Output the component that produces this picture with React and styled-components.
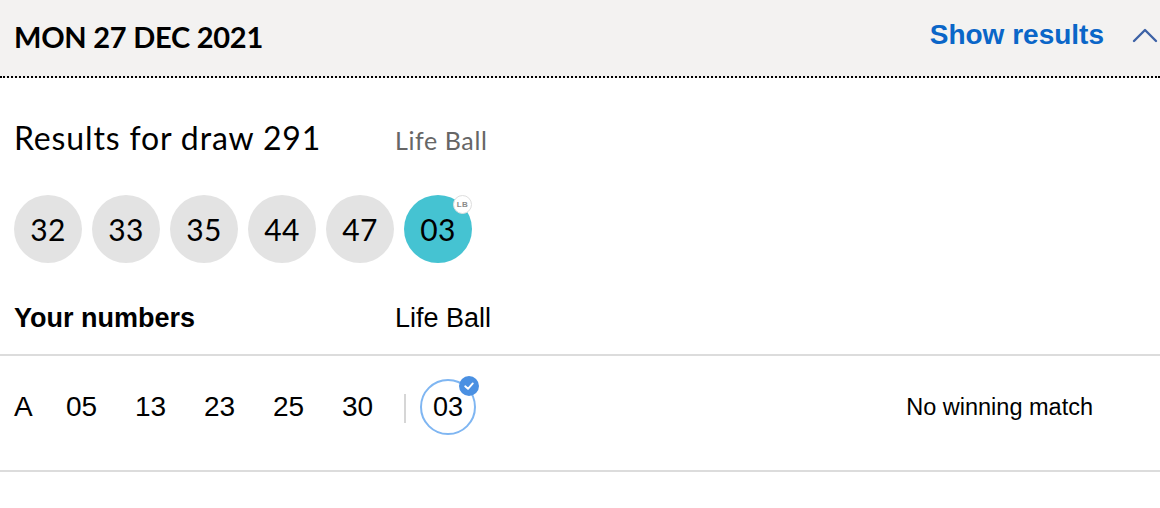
import React from 'react';
import styled, { createGlobalStyle } from 'styled-components';

const GlobalStyle = createGlobalStyle`
  html, body {
    margin: 0;
    padding: 0;
    background: #ffffff;
  }
  body {
    font-family: "Liberation Sans", Arial, sans-serif;
    color: #000;
  }
`

const Page = styled.div`
  width: 1160px;
  height: 508px;
  overflow: hidden;
  background: #fff;
`

const Header = styled.div`
  height: 76px;
  box-sizing: content-box;
  display: flex;
  align-items: center;
  justify-content: space-between;
  padding: 0 2px 0 14px;
  background: #f3f2f1;
  border-bottom: 2px dotted #000;
`

const DrawDate = styled.h2`
  margin: 0;
  font-family: Lato, "Noto Sans", sans-serif;
  font-size: 29px;
  font-weight: 700;
  letter-spacing: -0.25px;
  padding-bottom: 4px;
`

const Toggle = styled.button`
  display: flex;
  align-items: center;
  gap: 28px;
  border: 0;
  background: none;
  padding: 0 0 6px 0;
  cursor: pointer;
  font-family: "Liberation Sans", Arial, sans-serif;
  font-size: 28px;
  font-weight: 700;
  color: #0a66c8;
`

const Body = styled.div`
  padding: 0 14px;
`

const ResultsHead = styled.div`
  display: flex;
  align-items: baseline;
  padding-top: 40px;
`

const ResultsTitle = styled.h3`
  margin: 0;
  width: 381px;
  font-family: Lato, "Noto Sans", sans-serif;
  font-size: 32px;
  font-weight: 400;
  letter-spacing: 0.85px;
`

const Muted = styled.span`
  font-family: Lato, "Noto Sans", sans-serif;
  font-size: 25px;
  letter-spacing: 0.6px;
  color: #666;
`

const Balls = styled.div`
  display: flex;
  gap: 10px;
  margin-top: 38px;
`

const Ball = styled.div`
  position: relative;
  width: 68px;
  height: 68px;
  border-radius: 50%;
  display: flex;
  align-items: center;
  justify-content: center;
  background: ${p => (p.$life ? '#45c3d2' : '#e3e3e3')};
  font-family: Lato, "Noto Sans", sans-serif;
  font-size: 30px;
  letter-spacing: 0.3px;
`

const LbBadge = styled.span`
  position: absolute;
  top: 0;
  right: 0;
  width: 19px;
  height: 19px;
  border-radius: 50%;
  background: #fff;
  border: 1px solid #dedede;
  box-sizing: border-box;
  display: flex;
  align-items: center;
  justify-content: center;
  font-family: "Liberation Sans", Arial, sans-serif;
  font-size: 8px;
  font-weight: 700;
  color: #8a8a8a;
`

const NumbersHead = styled.div`
  display: flex;
  align-items: baseline;
  margin-top: 40px;
  padding-bottom: 20px;
  font-size: 27px;
`

const HeadLabel = styled.div`
  width: 381px;
  font-weight: ${p => (p.$bold ? 700 : 400)};
`

const Line = styled.div`
  height: 2px;
  background: #dcdcdc;
`

const LineRow = styled.div`
  height: 114px;
  box-sizing: border-box;
  display: flex;
  align-items: center;
  padding: 0 14px 12px;
  font-size: 28px;
`

const Cell = styled.span`
  width: ${p => p.$w}px;
  flex-shrink: 0;
`

const Divider = styled.span`
  width: 2px;
  height: 29px;
  background: #d6d6d6;
  margin: 2px 14px 0 0;
`

const Matched = styled.div`
  position: relative;
  width: 56px;
  height: 56px;
  border-radius: 50%;
  border: 2px solid #7fb6f2;
  box-sizing: border-box;
  display: flex;
  align-items: center;
  justify-content: center;
  font-size: 27px;
`

const Tick = styled.span`
  position: absolute;
  top: -5px;
  right: -5px;
  width: 20px;
  height: 20px;
  border-radius: 50%;
  background: #4a90e2;
  display: flex;
  align-items: center;
  justify-content: center;
`

const Outcome = styled.span`
  margin-left: auto;
  padding-right: 53px;
  font-size: 23.5px;
`

const Chevron = () => (
  <svg width="26" height="16" viewBox="0 0 26 16" fill="none">
    <path d="M2 14 L13 3 L24 14" stroke="#3d62a6" strokeWidth="2.4" strokeLinecap="round" strokeLinejoin="round" />
  </svg>
)

const TickIcon = () => (
  <svg width="12" height="12" viewBox="0 0 12 12" fill="none">
    <path d="M2.2 6.3 L5 8.8 L9.8 3.4" stroke="#fff" strokeWidth="1.9" strokeLinecap="round" strokeLinejoin="round" />
  </svg>
)

const drawn = ['32', '33', '35', '44', '47'];
const picks = ['05', '13', '23', '25', '30'];

export default function App() {
  return (
    <Page>
      <GlobalStyle />
      <Header>
        <DrawDate>MON 27 DEC 2021</DrawDate>
        <Toggle>
          Show results
          <Chevron />
        </Toggle>
      </Header>
      <Body>
        <ResultsHead>
          <ResultsTitle>Results for draw 291</ResultsTitle>
          <Muted>Life Ball</Muted>
        </ResultsHead>
        <Balls>
          {drawn.map(n => <Ball key={n}>{n}</Ball>)}
          <Ball $life>
            03
            <LbBadge>LB</LbBadge>
          </Ball>
        </Balls>
        <NumbersHead>
          <HeadLabel $bold>Your numbers</HeadLabel>
          <HeadLabel>Life Ball</HeadLabel>
        </NumbersHead>
      </Body>
      <Line />
      <LineRow>
        <Cell $w={52}>A</Cell>
        {picks.map(n => <Cell key={n} $w={n === '30' ? 62 : 69}>{n}</Cell>)}
        <Divider />
        <Matched>
          03
          <Tick><TickIcon /></Tick>
        </Matched>
        <Outcome>No winning match</Outcome>
      </LineRow>
      <Line />
    </Page>
  )
}
